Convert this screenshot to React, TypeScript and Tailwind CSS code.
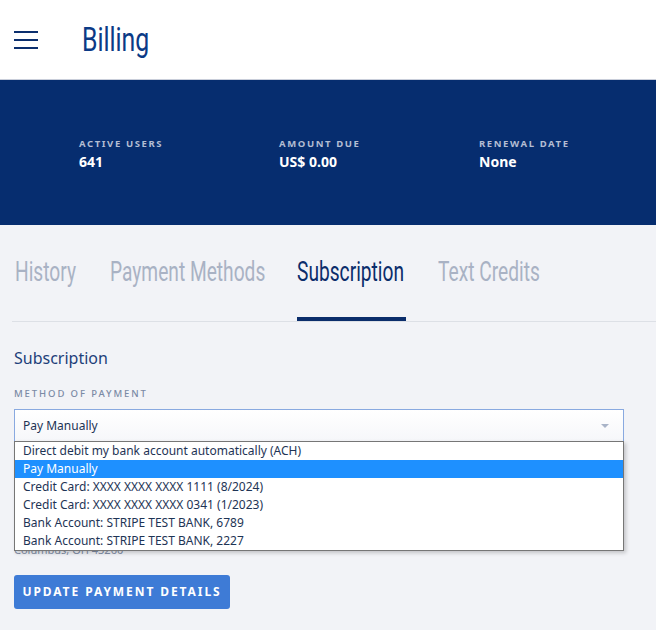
import React from 'react';

const heading = { fontFamily: 'Roboto, "Liberation Sans", sans-serif' };

const stats = [
  { label: 'ACTIVE USERS', value: '641' },
  { label: 'AMOUNT DUE', value: 'US$ 0.00' },
  { label: 'RENEWAL DATE', value: 'None' },
];

const tabs = [
  { name: 'History', w: 'w-[63px]' },
  { name: 'Payment Methods', w: 'w-[155px]' },
  { name: 'Subscription', w: 'w-[109px]' },
  { name: 'Text Credits', w: 'w-[105px]' },
];

const options = [
  'Direct debit my bank account automatically (ACH)',
  'Pay Manually',
  'Credit Card: XXXX XXXX XXXX 1111 (8/2024)',
  'Credit Card: XXXX XXXX XXXX 0341 (1/2023)',
  'Bank Account: STRIPE TEST BANK, 6789',
  'Bank Account: STRIPE TEST BANK, 2227',
];

export default function App() {
  return (
    <div className="min-h-[630px] w-[656px] bg-[#f2f3f7] overflow-hidden" style={{ fontFamily: '"Noto Sans", "Open Sans", sans-serif' }}>
      {/* Header */}
      <header className="h-[80px] bg-white border-b border-[#c9ceda] flex items-center">
        <div className="ml-[14px] w-[24px] flex flex-col gap-[6px] shrink-0">
          <span className="block h-[2px] bg-[#0b2f6e]"></span>
          <span className="block h-[2px] bg-[#0b2f6e]"></span>
          <span className="block h-[2px] bg-[#0b2f6e]"></span>
        </div>
        <h1 className="ml-[44px] w-[70px] whitespace-nowrap text-[34px] text-[#0b3a86] leading-none mt-[-2px]" style={heading}>
          <span className="inline-block origin-left scale-x-[0.73]">Billing</span>
        </h1>
      </header>

      {/* Stats banner */}
      <div className="h-[145px] bg-[#062d6f] flex pl-[79px] pt-[58px]">
        {stats.map((s) => (
          <div key={s.label} className="w-[200px] shrink-0">
            <div className="text-[9.5px] font-bold tracking-[0.17em] text-[#b3bdd3] leading-[12px]">{s.label}</div>
            <div className="text-[14px] font-bold text-white leading-[18px] mt-[3px]">{s.value}</div>
          </div>
        ))}
      </div>

      {/* Tabs */}
      <div className="ml-[12px] border-b border-[#dde0e6] flex h-[97px] gap-[32px] pl-[3px]">
        {tabs.map((t) => (
          <div
            key={t.name}
            className={`${t.w} shrink-0 whitespace-nowrap h-full flex items-center text-[27px] border-b-[4px] ${
              t.name === 'Subscription' ? 'text-[#0b2d6b] border-[#0b2d6b]' : 'text-[#a9b2c4] border-transparent'
            }`}
            style={heading}
          >
            <span className="inline-block origin-left scale-x-[0.71] mt-[2px]">{t.name}</span>
          </div>
        ))}
      </div>

      {/* Subscription form */}
      <div className="px-[14px] pt-[25px]">
        <h2 className="text-[16px] text-[#1e3f7a] leading-[22px]">Subscription</h2>
        <div className="mt-[19px] text-[9.5px] tracking-[0.2em] text-[#7b8aa5] font-medium leading-[12px]">METHOD OF PAYMENT</div>
        <div className="relative mt-[9px] w-[610px]">
          <div className="h-[33px] border border-[#89a9e0] flex items-center pl-[8px] pr-[14px] text-[12px] text-[#1e3455] bg-gradient-to-b from-white to-[#f6f7fa]">
            <span className="flex-1">Pay Manually</span>
            <span className="w-0 h-0 border-l-[4px] border-r-[4px] border-t-[4px] border-l-transparent border-r-transparent border-t-[#a9b4c8]"></span>
          </div>

          {/* Address line peeking out below the open list */}
          <div className="h-[116px] flex flex-col justify-end pb-[1px] text-[11px] text-[#8390a8] leading-[14px]">
            <div>Columbus, OH 43260</div>
          </div>

          <div className="absolute left-0 top-[32px] w-[610px] bg-white border border-[#767676] shadow-[2px_2px_4px_rgba(0,0,0,0.2)]">
            {options.map((o) => (
              <div
                key={o}
                className={`h-[18px] pl-[8px] text-[12px] leading-[18px] ${o === 'Pay Manually' ? 'bg-[#1e90ff] text-white' : 'text-[#1e3455]'}`}
              >
                {o}
              </div>
            ))}
          </div>
        </div>

        <button className="mt-[17px] h-[34px] w-[216px] rounded-[3px] bg-[#3e7bd6] text-white text-[12px] font-bold tracking-[0.16em]">
          UPDATE PAYMENT DETAILS
        </button>
      </div>
    </div>
  );
}
